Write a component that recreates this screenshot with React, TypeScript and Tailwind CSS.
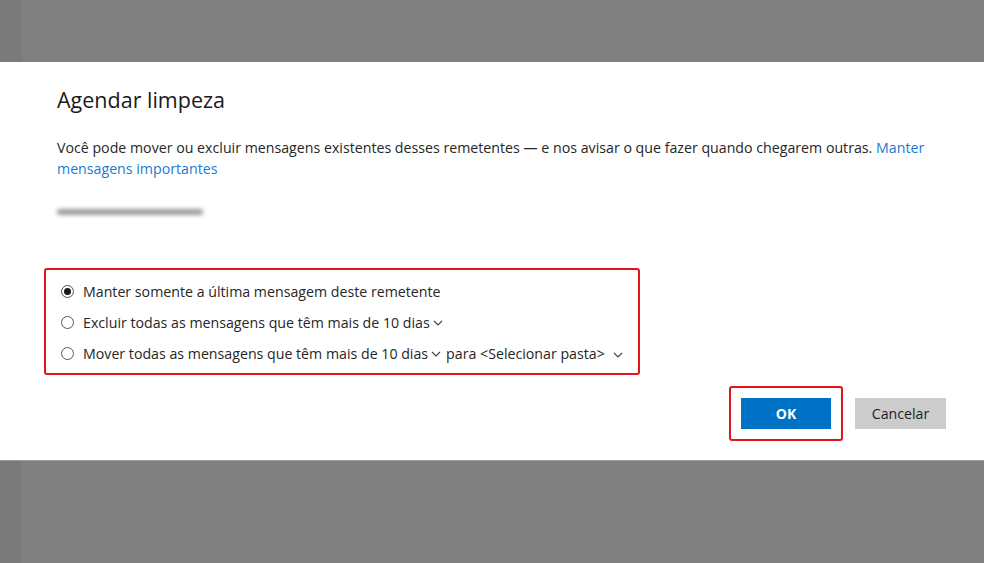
import { useState } from 'react';

const font = { fontFamily: '"Open Sans", "Noto Sans", sans-serif' };

function Chevron() {
  return (
    <svg
      viewBox="0 0 10 6"
      className="ml-[3px] inline-block h-[6px] w-[10px] text-[#444]"
      fill="none"
      stroke="currentColor"
      strokeWidth="1.2"
    >
      <polyline points="1,1 5,5 9,1" />
    </svg>
  );
}

function Radio({ checked }: { checked: boolean }) {
  return (
    <span className="flex h-[13px] w-[13px] shrink-0 items-center justify-center rounded-full border border-[#555]">
      {checked && <span className="h-[7px] w-[7px] rounded-full bg-[#1a1a1a]" />}
    </span>
  );
}

const options = [
  { id: 'keep', label: 'Manter somente a última mensagem deste remetente' },
  { id: 'delete', label: 'Excluir todas as mensagens que têm mais de 10 dias', chevron: true },
  {
    id: 'move',
    label: 'Mover todas as mensagens que têm mais de 10 dias',
    chevron: true,
    folder: true,
  },
];

export default function App() {
  const [selected, setSelected] = useState('keep');

  return (
    <div className="flex h-[563px] w-[984px] flex-col bg-[#808080]" style={font}>
      <div className="flex h-[62px] shrink-0">
        <div className="w-[22px] bg-[#7a7a7a]" />
      </div>

      <div className="flex h-[399px] shrink-0 flex-col border-b border-[#9a9a9a] bg-white pl-[57px] pr-[38px] pt-[24px]">
        <h1 className="text-[21.5px] leading-[28px] text-[#1a1a1a]">Agendar limpeza</h1>

        <div className="mt-[23px] text-[14.2px] leading-[21px] text-[#262626]">
          Você pode mover ou excluir mensagens existentes desses remetentes — e nos avisar o que
          fazer quando chegarem outras. <span className="text-[#1b7ad2]">Manter mensagens importantes</span>
        </div>

        <div className="mt-[30px] h-[6px] w-[146px] rounded-full bg-[#9a9a9a] blur-[2px]" />

        <div className="-ml-[13px] mt-[53px] flex w-[596px] flex-col rounded-[3px] border-2 border-[#e3141c] pb-[4px] pl-[15px] pt-[6px]">
          {options.map((o) => (
            <label
              key={o.id}
              className="flex h-[31px] cursor-pointer items-center text-[14.2px] text-[#262626]"
              onClick={() => setSelected(o.id)}
            >
              <Radio checked={selected === o.id} />
              <span className="ml-[9px]">{o.label}</span>
              {o.chevron && <Chevron />}
              {o.folder && (
                <>
                  <span className="ml-[5px]">para &lt;Selecionar pasta&gt;</span>
                  <span className="ml-[5px]">
                    <Chevron />
                  </span>
                </>
              )}
            </label>
          ))}
        </div>

        <div className="mt-[11px] flex items-center justify-end gap-[12px]">
          <div className="rounded-[3px] border-2 border-[#e3141c] p-[10px]">
            <button className="h-[31px] w-[90px] bg-[#0072c6] text-[14px] font-bold text-white">
              OK
            </button>
          </div>
          <button className="h-[31px] w-[91px] bg-[#cccccc] text-[14.2px] text-[#222]">
            Cancelar
          </button>
        </div>
      </div>

      <div className="flex flex-1">
        <div className="w-[22px] bg-[#7a7a7a]" />
      </div>
    </div>
  );
}
